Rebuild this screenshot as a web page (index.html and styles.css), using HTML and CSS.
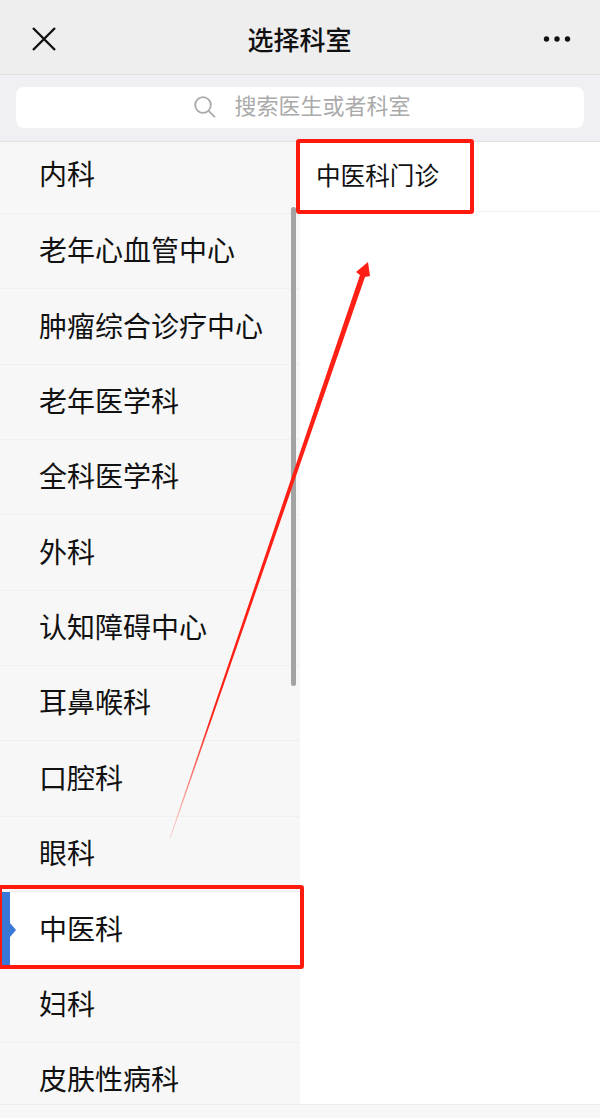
FILE: index.html
```html
<!DOCTYPE html>
<html lang="zh-CN">
<head>
    <meta charset="UTF-8">
    <meta name="viewport" content="width=device-width, initial-scale=1.0">
    <title>选择科室</title>
    <link rel="stylesheet" href="styles.css">
</head>
<body>
    <div class="page">
        <!-- Top bar -->
        <header class="topbar">
            <svg class="close-icon" width="26" height="26" viewBox="0 0 26 26">
                <path d="M3 2 L25 24 M25 2 L3 24" />
            </svg>
            <h1 class="title">选择科室</h1>
            <svg class="more-icon" width="28" height="8" viewBox="0 0 28 8">
                <circle cx="3.5" cy="4" r="2.7" />
                <circle cx="14" cy="4" r="2.7" />
                <circle cx="24.5" cy="4" r="2.7" />
            </svg>
        </header>

        <!-- Search -->
        <div class="search-bar">
            <div class="search-box">
                <svg class="search-icon" width="22" height="22" viewBox="0 0 22 22">
                    <circle cx="9" cy="9" r="7.8" />
                    <path d="M14.6 14.8 L21 21.2" />
                </svg>
                <span class="search-text">搜索医生或者科室</span>
            </div>
        </div>

        <div class="columns">
            <ul class="dept-list">
                <li class="dept">内科</li>
                <li class="dept">老年心血管中心</li>
                <li class="dept">肿瘤综合诊疗中心</li>
                <li class="dept">老年医学科</li>
                <li class="dept">全科医学科</li>
                <li class="dept">外科</li>
                <li class="dept">认知障碍中心</li>
                <li class="dept">耳鼻喉科</li>
                <li class="dept">口腔科</li>
                <li class="dept">眼科</li>
                <li class="dept dept-active">中医科</li>
                <li class="dept">妇科</li>
                <li class="dept">皮肤性病科</li>
            </ul>
            <ul class="clinic-list">
                <li class="clinic">中医科门诊</li>
            </ul>
        </div>
        <div class="bottom-strip"></div>

        <div class="scrollbar"></div>

        <!-- Red annotations over the screenshot -->
        <div class="mark mark-clinic"></div>
        <div class="mark mark-dept"></div>
        <svg class="arrow" width="600" height="1118" viewBox="0 0 600 1118">
            <defs>
                <linearGradient id="arrowFade" gradientUnits="userSpaceOnUse" x1="170" y1="838" x2="230" y2="664">
                    <stop offset="0" stop-color="#ff2015" stop-opacity="0.15" />
                    <stop offset="0.7" stop-color="#ff2015" stop-opacity="1" />
                </linearGradient>
            </defs>
            <polygon fill="url(#arrowFade)" points="169.6,838 360,275 356,272 368,262 370,276 365,277 170.6,838" />
        </svg>
    </div>
</body>
</html>
```

FILE: styles.css
```css
* {
    box-sizing: border-box;
}
body {
    margin: 0;
    background-color: #fff;
    font-family: "Noto Sans CJK SC", "Noto Sans", sans-serif;
    color: #111;
}
ul {
    list-style: none;
    margin: 0;
    padding: 0;
}
.page {
    position: relative;
    width: 600px;
    height: 1118px;
    overflow: hidden;
    display: flex;
    flex-direction: column;
}

/* Top bar */
.topbar {
    height: 75px;
    flex: none;
    display: flex;
    align-items: center;
    justify-content: space-between;
    padding: 4px 30px 0 30px;
    background-color: #eeeeef;
    border-bottom: 1px solid #dfdfe1;
}
.title {
    margin: 0;
    font-size: 26px;
    font-weight: 500;
    line-height: 1;
}
.close-icon path {
    fill: none;
    stroke: #111;
    stroke-width: 2.4;
}
.more-icon {
    fill: #111;
    margin-right: -1px;
}

/* Search */
.search-bar {
    height: 67px;
    flex: none;
    padding: 12px 16px 13px;
    background-color: #efeff4;
    border-bottom: 1px solid #e0e0e3;
}
.search-box {
    height: 41px;
    display: flex;
    align-items: center;
    justify-content: center;
    gap: 18px;
    padding: 0 0 2px 5px;
    background-color: #fff;
    border-radius: 8px;
    font-size: 22px;
    color: #aaa;
}
.search-text {
    margin-bottom: 6px;
}
.search-icon {
    fill: none;
    stroke: #aaa;
    stroke-width: 1.8;
}

/* Columns */
.columns {
    flex: 1;
    display: flex;
    min-height: 0;
}
.dept-list {
    width: 300px;
    flex: none;
    overflow: hidden;
    background-color: #f7f7f7;
}
.dept {
    position: relative;
    height: 75.35px;
    display: flex;
    align-items: center;
    padding: 0 0 4px 39px;
    font-size: 28px;
    border-bottom: 1px solid #f0f0f0;
}
.dept:first-child {
    height: 72px;
    padding-bottom: 9px;
}
.dept-active {
    background-color: #fff;
    border-bottom: none;
}
.dept-active::before {
    content: "";
    position: absolute;
    left: 2px;
    top: 0;
    bottom: 0;
    width: 8px;
    background-color: #3a78d8;
}
.dept-active::after {
    content: "";
    position: absolute;
    left: 10px;
    top: 50%;
    margin-top: -7px;
    border-left: 6px solid #3a78d8;
    border-top: 7px solid transparent;
    border-bottom: 7px solid transparent;
}
.clinic-list {
    flex: 1;
    background-color: #fff;
}
.clinic {
    height: 70px;
    display: flex;
    align-items: center;
    padding: 0 0 5px 16px;
    font-size: 24.6px;
    border-bottom: 1px solid #f0f0f0;
}
.bottom-strip {
    height: 14px;
    flex: none;
    background-color: #f7f7f7;
    border-top: 1px solid #ececec;
}
.scrollbar {
    position: absolute;
    left: 291px;
    top: 207px;
    width: 5px;
    height: 479px;
    border-radius: 3px;
    background-color: #a3a3a3;
}

/* Annotations */
.mark {
    position: absolute;
    border: 4px solid #ff1a0d;
    border-radius: 3px;
}
.mark-clinic {
    left: 296px;
    top: 139px;
    width: 178px;
    height: 75px;
}
.mark-dept {
    left: -2px;
    top: 885px;
    width: 306px;
    height: 84px;
}
.arrow {
    position: absolute;
    left: 0;
    top: 0;
}
```
